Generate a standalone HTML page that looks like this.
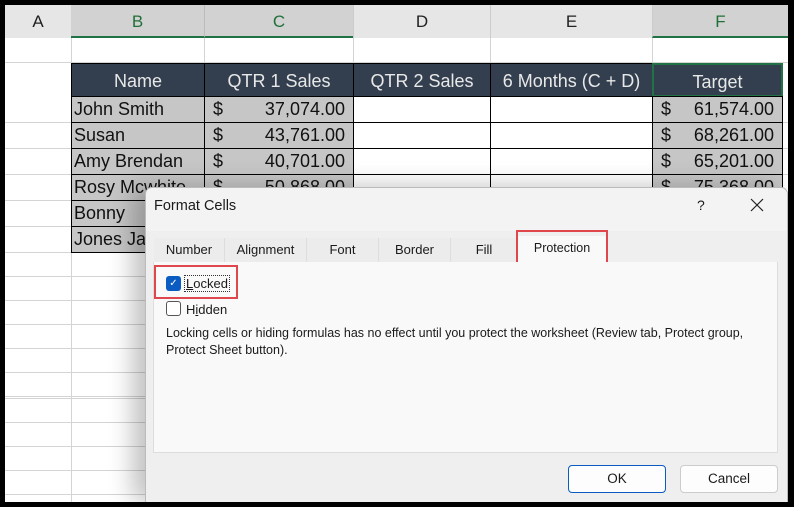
<!DOCTYPE html><html><head><style>
*{margin:0;padding:0;box-sizing:border-box}
html,body{width:794px;height:507px;overflow:hidden}
body{background:#000;position:relative;font-family:"Liberation Sans",sans-serif}
.a{position:absolute}
#sheet{left:5px;top:5px;width:783px;height:497px;background:#fff;overflow:hidden}
.hl{position:absolute;left:0;width:783px;height:1px;background:#d4d4d4}
.vl{position:absolute;top:0;width:1px;height:464px;background:#d4d4d4}
.ch{position:absolute;top:0;height:33px;background:#e6e6e6;color:#222;font-size:17px;text-align:center;line-height:33px}
.ch.s{background:#d2d2d2;color:#21703a;border-bottom:2px solid #217346}
.th{position:absolute;top:58px;height:34px;background:#333f4f;color:#e8e8e8;font-size:18px;text-align:center;line-height:34px;border:1px solid #000}
.c{position:absolute;height:27px;border:1px solid #000;font-size:18px;line-height:25px;color:#111;white-space:nowrap;overflow:hidden}
.g{background:#c6c6c6}
.w{background:#fff}
.d{padding-left:8px}
.d span{position:absolute;right:8px}
#dlg{left:145px;top:187px;width:643px;height:315px;background:#f3f3f3;border:1px solid #bbb;border-bottom:none;border-radius:7px 7px 0 0;box-shadow:-12px 0 25px rgba(0,0,0,.25);font-size:13px;color:#1a1a1a;overflow:hidden}
.tab{position:absolute;top:50px;height:24px;background:#ececec;border-right:1px solid #ddd;text-align:center;line-height:24px}
.btn{position:absolute;top:277px;width:98px;height:28px;background:#fdfdfd;border:1px solid #ccc;border-radius:4px;text-align:center;line-height:26px;font-size:13.5px}
</style></head><body>
<div id="sheet" class="a">
<div class="ch" style="left:0;width:66px">A</div>
<div class="ch s" style="left:66px;width:133px">B</div>
<div class="ch s" style="left:199px;width:149px;border-left:1px solid #bbb">C</div>
<div class="ch" style="left:348px;width:137px;border-left:1px solid #ccc">D</div>
<div class="ch" style="left:485px;width:162px;border-left:1px solid #ccc">E</div>
<div class="ch s" style="left:647px;width:136px;border-left:1px solid #ccc">F</div>
<div class="hl" style="top:57px"></div>
<div class="vl" style="left:66px;top:33px"></div><div class="vl" style="left:199px;top:33px"></div><div class="vl" style="left:348px;top:33px"></div><div class="vl" style="left:485px;top:33px"></div><div class="vl" style="left:647px;top:33px"></div>
<div class="hl" style="top:117px"></div><div class="hl" style="top:143px"></div><div class="hl" style="top:169px"></div><div class="hl" style="top:195px"></div><div class="hl" style="top:221px"></div><div class="hl" style="top:247px"></div>
<div class="hl" style="top:271px"></div><div class="hl" style="top:295px"></div><div class="hl" style="top:319px"></div><div class="hl" style="top:343px"></div><div class="hl" style="top:367px"></div><div class="hl" style="top:391px"></div><div class="hl" style="top:393px"></div><div class="hl" style="top:417px"></div><div class="hl" style="top:441px"></div><div class="hl" style="top:465px"></div><div class="hl" style="top:489px"></div>
<div class="th" style="left:66px;width:134px">Name</div>
<div class="th" style="left:199px;width:150px">QTR 1 Sales</div>
<div class="th" style="left:348px;width:138px">QTR 2 Sales</div>
<div class="th" style="left:485px;width:163px">6 Months (C + D)</div>
<div class="th" style="left:647px;width:131px;border:2px solid #217346">Target</div>
<div class="c g" style="left:66px;top:91px;width:134px;padding-left:2px">John Smith</div>
<div class="c g" style="left:66px;top:117px;width:134px;padding-left:2px">Susan</div>
<div class="c g" style="left:66px;top:143px;width:134px;padding-left:2px">Amy Brendan</div>
<div class="c g" style="left:66px;top:169px;width:134px;padding-left:2px">Rosy Mcwhite</div>
<div class="c g" style="left:66px;top:195px;width:134px;padding-left:2px">Bonny</div>
<div class="c g" style="left:66px;top:221px;width:134px;padding-left:2px">Jones Jar</div>
<div class="c g d" style="left:199px;top:91px;width:150px">$<span>37,074.00</span></div>
<div class="c g d" style="left:199px;top:117px;width:150px">$<span>43,761.00</span></div>
<div class="c g d" style="left:199px;top:143px;width:150px">$<span>40,701.00</span></div>
<div class="c g d" style="left:199px;top:169px;width:150px">$<span>50,868.00</span></div>
<div class="c w" style="left:348px;top:91px;width:138px"></div><div class="c w" style="left:348px;top:117px;width:138px"></div><div class="c w" style="left:348px;top:143px;width:138px"></div><div class="c w" style="left:348px;top:169px;width:138px"></div>
<div class="c w" style="left:485px;top:91px;width:163px"></div><div class="c w" style="left:485px;top:117px;width:163px"></div><div class="c w" style="left:485px;top:143px;width:163px"></div><div class="c w" style="left:485px;top:169px;width:163px"></div>
<div class="c g d" style="left:647px;top:91px;width:131px">$<span>61,574.00</span></div>
<div class="c g d" style="left:647px;top:117px;width:131px">$<span>68,261.00</span></div>
<div class="c g d" style="left:647px;top:143px;width:131px">$<span>65,201.00</span></div>
<div class="c g d" style="left:647px;top:169px;width:131px">$<span>75,368.00</span></div>
</div>
<div id="dlg" class="a">
<div class="a" style="left:8px;top:10px;font-size:14.5px">Format Cells</div>
<div class="a" style="left:551px;top:9px;font-size:14px">?</div>
<svg class="a" style="left:604px;top:10px" width="14" height="14"><path d="M1 1L13 13M13 1L1 13" stroke="#222" stroke-width="1.2"/></svg>
<div class="a" style="left:0;top:43px;width:641px;height:272px;background:#efefef"></div>
<div class="tab" style="left:8px;width:71px">Number</div>
<div class="tab" style="left:79px;width:82px">Alignment</div>
<div class="tab" style="left:161px;width:72px">Font</div>
<div class="tab" style="left:233px;width:72px">Border</div>
<div class="tab" style="left:305px;width:67px">Fill</div>
<div class="tab" style="left:372px;width:89px;top:48px;background:#f9f9f9;height:27px;font-size:12.5px">Protection</div>
<div class="a" style="left:370px;top:42px;width:92px;height:35px;border:2px solid #e0474c"></div>
<div class="a" style="left:7px;top:74px;width:625px;height:191px;background:#f9f9f9;border:1px solid #ddd;border-top:none"></div>
<div class="a" style="left:8px;top:77px;width:84px;height:34px;border:2px solid #e0474c"></div>
<div class="a" style="left:20px;top:88px;width:15px;height:15px;background:#0b5cc2;border-radius:3px;color:#fff;font-size:10px;text-align:center;line-height:15px">✓</div>
<div class="a" style="left:38px;top:87px;border:1px dotted #333;padding:0 1px;line-height:15px"><u>L</u>ocked</div>
<div class="a" style="left:20px;top:113px;width:15px;height:15px;border:1px solid #555;border-radius:3px;background:#fff"></div>
<div class="a" style="left:40px;top:114px">H<u>i</u>dden</div>
<div class="a" style="left:20px;top:137px;width:585px;line-height:17px;font-size:12.5px">Locking cells or hiding formulas has no effect until you protect the worksheet (Review tab, Protect group, Protect Sheet button).</div>
<div class="btn" style="left:422px;border:1px solid #0b5cc2">OK</div>
<div class="btn" style="left:534px">Cancel</div>
</div>
</body></html>
